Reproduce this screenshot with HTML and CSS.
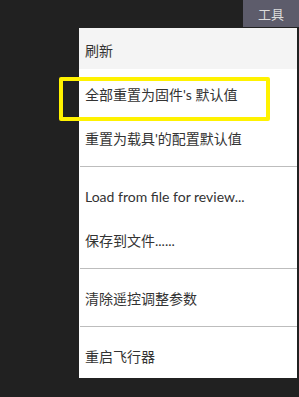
FILE: index.html
```html
<!DOCTYPE html>
<html lang="zh-CN">
<head>
	<meta charset="UTF-8">
	<title>工具菜单</title>
	<link rel="stylesheet" href="styles.css">
</head>
<body>
	<div class="topbar">
		<div class="tool-btn">工具</div>
	</div>
	<div class="menu">
		<div class="item active">刷新</div>
		<div class="item">全部重置为固件's 默认值</div>
		<div class="item">重置为载具'的配置默认值</div>
		<div class="sep"></div>
		<div class="item">Load from file for review...</div>
		<div class="item">保存到文件......</div>
		<div class="sep"></div>
		<div class="item">清除遥控调整参数</div>
		<div class="sep"></div>
		<div class="item">重启飞行器</div>
		<div class="mark"></div>
	</div>
</body>
</html>
```

FILE: styles.css
```css
html, body {margin: 0; padding: 0;}
body {background: #212121; width: 299px; height: 397px; overflow: hidden; font-family: "Lato", "Noto Sans CJK SC", sans-serif;}
.topbar {display: flex; justify-content: flex-end; height: 28px;}
.tool-btn {width: 56px; height: 27px; background: #5d5c6b; color: #dcdcdc; font-size: 13px; display: flex; align-items: center; justify-content: center;}
.menu {position: relative; margin-left: 79px; width: 218px; background: #fff; display: flex; flex-direction: column;}
.item {height: 44px; display: flex; align-items: center; padding-left: 6px; font-size: 14px; color: #333; white-space: nowrap;}
.item.active {height: 41px; padding-top: 3px; box-sizing: border-box; margin-bottom: 3px; background: #f4f4f4;}
.sep {height: 1px; background: #bdbdbd; margin: 6px 0 7px 1px;}
.mark {position: absolute; left: -20px; top: 49px; width: 203px; height: 36px; border: 4px solid #fff200; border-radius: 2px;}
```
